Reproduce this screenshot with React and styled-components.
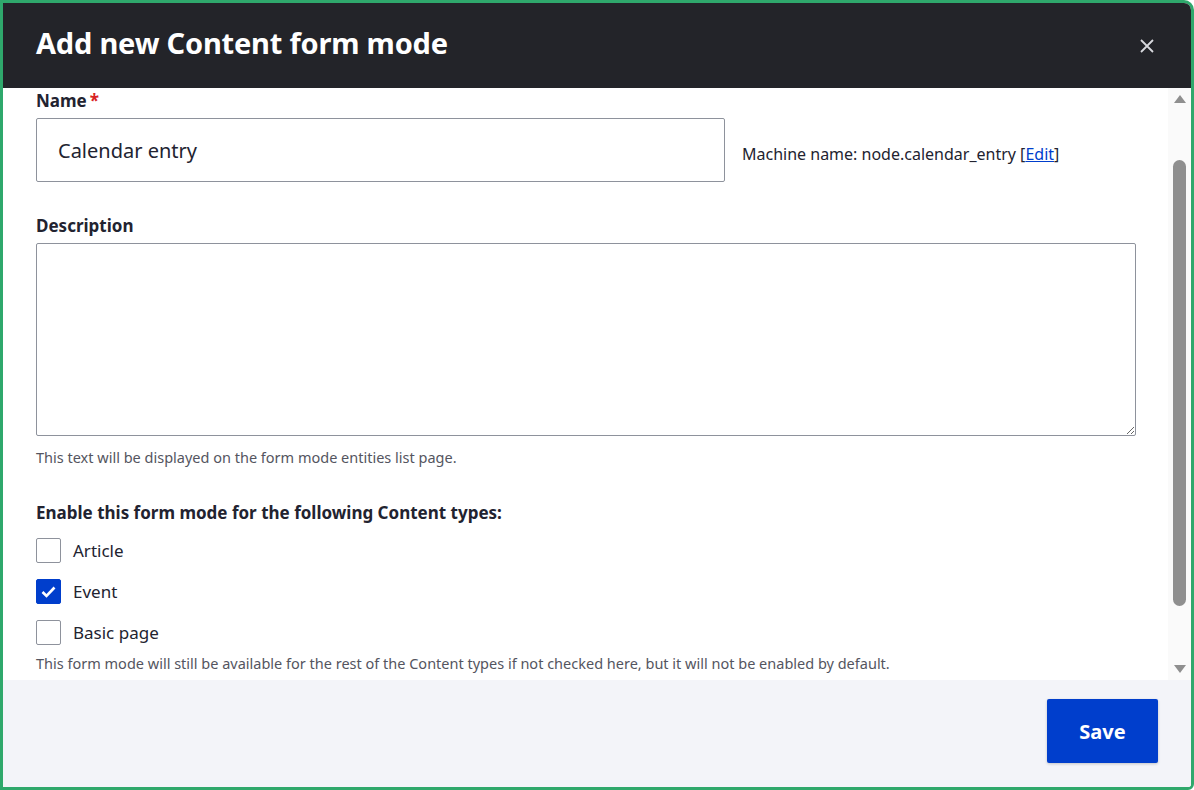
import React from "react";
import styled, { createGlobalStyle } from "styled-components";

const Global = createGlobalStyle`
  html, body { margin: 0; padding: 0; background: #fff; }
  body { font-family: "Noto Sans", "Open Sans", sans-serif; color: #222330; }
  * { box-sizing: border-box; }
`;

const Frame = styled.div`
  width: 1194px;
  height: 790px;
  border: 3px solid #2fa86c;
  border-top-right-radius: 10px;
  border-bottom-right-radius: 6px;
  display: flex;
  flex-direction: column;
  overflow: hidden;
`;

const Header = styled.div`
  height: 85px;
  flex: none;
  background: #232429;
  color: #fff;
  display: flex;
  align-items: center;
  justify-content: space-between;
  padding: 0 36px 0 33px;
`;

const Title = styled.h1`
  margin: 0;
  font-size: 29px;
  font-weight: 700;
  letter-spacing: -0.2px;
  padding-bottom: 6px;
`;

const Close = styled.button`
  background: none;
  border: none;
  padding: 0;
  cursor: pointer;
  display: flex;
`;

const Body = styled.div`
  height: 592px;
  flex: none;
  display: flex;
  overflow: hidden;
`;

const Content = styled.div`
  flex: 1;
  padding: 2px 30px 0 33px;
`;

const Scrollbar = styled.div`
  width: 23px;
  background: #fafafa;
  display: flex;
  flex-direction: column;
  align-items: center;
  padding: 6px 0 6px;
`;

const Thumb = styled.div`
  width: 13px;
  height: 446px;
  margin-top: 56px;
  border-radius: 7px;
  background: #8f8f8f;
  margin-bottom: auto;
`;

const Label = styled.div`
  font-weight: 700;
  font-size: 17px;
  line-height: 22px;
  margin-bottom: 6px;
`;

const Req = styled.span`
  color: #d72222;
  margin-left: 3px;
`;

const Row = styled.div`
  display: flex;
  align-items: center;
  gap: 17px;
`;

const Input = styled.div`
  width: 689px;
  height: 64px;
  border: 1px solid #8e929c;
  border-radius: 2px;
  display: flex;
  align-items: center;
  padding: 0 21px;
  font-size: 20px;
`;

const Machine = styled.div`
  font-size: 16px;
  padding-top: 7px;
  a { color: #003ecc; }
`;

const Field = styled.div`
  margin-top: ${(p) => p.mt || 0}px;
`;

const TextArea = styled.textarea`
  display: block;
  width: 1100px;
  height: 193px;
  border: 1px solid #8e929c;
  border-radius: 2px;
  font-family: inherit;
`;

const Help = styled.div`
  font-size: 14.5px;
  color: #545560;
  margin-top: ${(p) => p.mt || 0}px;
  white-space: nowrap;
`;

const Check = styled.label`
  display: flex;
  align-items: center;
  gap: 12px;
  font-size: 17px;
  height: 41px;
`;

const Box = styled.span`
  width: 25px;
  height: 25px;
  border-radius: 2px;
  border: 1px solid ${(p) => (p.on ? "#003ecc" : "#8e929c")};
  background: ${(p) => (p.on ? "#003ecc" : "#fff")};
  display: flex;
  align-items: center;
  justify-content: center;
`;

const Footer = styled.div`
  flex: 1;
  background: #f3f4f9;
  display: flex;
  justify-content: flex-end;
  align-items: flex-start;
  padding: 19px 33px 0 0;
`;

const Save = styled.button`
  width: 111px;
  height: 64px;
  border: none;
  border-radius: 2px;
  background: #003ecc;
  color: #fff;
  font-family: inherit;
  font-weight: 700;
  font-size: 20px;
  box-shadow: 0 1px 3px rgba(0,0,0,0.2);
`;

const Arrow = ({ up }) => (
  <svg width="14" height="10" viewBox="0 0 14 10">
    <path d={up ? "M7 1 L13 9 L1 9 Z" : "M1 1 L13 1 L7 9 Z"} fill="#8f8f8f" />
  </svg>
);

const types = [["Article", false], ["Event", true], ["Basic page", false]];

export default function App() {
  return (
    <>
      <Global />
      <Frame>
        <Header>
          <Title>Add new Content form mode</Title>
          <Close aria-label="Close">
            <svg width="16" height="16" viewBox="0 0 16 16">
              <path d="M2 2 L14 14 M14 2 L2 14" stroke="#d8d9de" strokeWidth="1.8" />
            </svg>
          </Close>
        </Header>
        <Body>
          <Content>
            <Label>Name<Req>*</Req></Label>
            <Row>
              <Input>Calendar entry</Input>
              <Machine>Machine name: node.calendar_entry [<a href="#">Edit</a>]</Machine>
            </Row>
            <Field mt={33}>
              <Label>Description</Label>
              <TextArea />
            </Field>
            <Help mt={11}>This text will be displayed on the form mode entities list page.</Help>
            <Field mt={35}>
              <Label>Enable this form mode for the following Content types:</Label>
              {types.map(([t, on]) => (
                <Check key={t}>
                  <Box on={on}>
                    {on && (
                      <svg width="15" height="12" viewBox="0 0 15 12">
                        <path d="M1.5 6 L5.5 10 L13.5 1.5" stroke="#fff" strokeWidth="2.6" fill="none" />
                      </svg>
                    )}
                  </Box>
                  {t}
                </Check>
              ))}
              <Help>This form mode will still be available for the rest of the Content types if not checked here, but it will not be enabled by default.</Help>
            </Field>
          </Content>
          <Scrollbar>
            <Arrow up />
            <Thumb />
            <Arrow />
          </Scrollbar>
        </Body>
        <Footer>
          <Save>Save</Save>
        </Footer>
      </Frame>
    </>
  );
}
